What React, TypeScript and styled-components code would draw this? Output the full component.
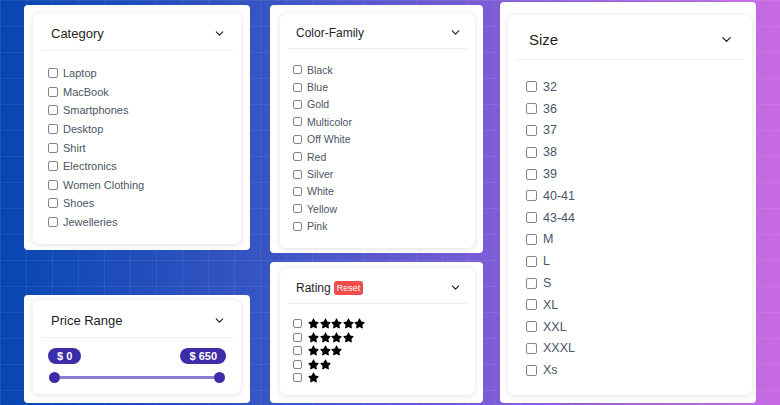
import React from "react";
import styled, { createGlobalStyle } from "styled-components";
import { ChevronDown } from "lucide-react";
import { FaStar } from "react-icons/fa";

const GlobalStyle = createGlobalStyle`
  html, body {
    margin: 0;
    padding: 0;
    width: 780px;
    height: 405px;
    overflow: hidden;
  }
  body {
    font-family: "Liberation Sans", Arial, sans-serif;
  }
`;

type Size = "sm" | "md" | "lg";

const metrics = {
  sm: { head: 36, title: 12, padX: 16, lineM: 8, font: 10.5, row: 17.4, box: 9, listL: 13, listT: 12, gap: 5 },
  md: { head: 38, title: 13, padX: 18, lineM: 8, font: 11, row: 18.6, box: 10, listL: 15, listT: 13, gap: 5 },
  lg: { head: 45, title: 15, padX: 21, lineM: 9, font: 12.5, row: 21.8, box: 11, listL: 18, listT: 16, gap: 6 },
};

const Page = styled.div`
  width: 780px;
  height: 405px;
  display: flex;
  align-items: flex-start;
  padding-left: 24px;
  box-sizing: border-box;
  background-image:
    linear-gradient(rgba(255, 255, 255, 0.07) 1px, transparent 1px),
    linear-gradient(90deg, rgba(255, 255, 255, 0.07) 1px, transparent 1px),
    linear-gradient(90deg, #0747b2 0%, #3a55c4 35%, #7b5cd6 62%, #c86be2 100%);
  background-size: 26px 26px, 26px 26px, 100% 100%;
`;

const Column = styled.div<{ $w: number; $top: number; $gap: number; $ml: number }>`
  width: ${({ $w }) => $w}px;
  margin-top: ${({ $top }) => $top}px;
  margin-left: ${({ $ml }) => $ml}px;
  display: flex;
  flex-direction: column;
  gap: ${({ $gap }) => $gap}px;
`;

const Outer = styled.div<{ $h: number; $pad: string }>`
  height: ${({ $h }) => $h}px;
  box-sizing: border-box;
  background: #ffffff;
  border-radius: 4px;
  padding: ${({ $pad }) => $pad};
  display: flex;
  flex-direction: column;
`;

const Inner = styled.div`
  flex: 1;
  background: #ffffff;
  border-radius: 7px;
  box-shadow: 0 1px 6px rgba(0, 0, 0, 0.13);
  display: flex;
  flex-direction: column;
`;

const Header = styled.div<{ $s: Size }>`
  height: ${({ $s }) => metrics[$s].head}px;
  margin: 0 ${({ $s }) => metrics[$s].lineM}px;
  padding: 4px ${({ $s }) => metrics[$s].padX - metrics[$s].lineM - 3}px 0
    ${({ $s }) => metrics[$s].padX - metrics[$s].lineM}px;
  border-bottom: 1px solid #eeeeee;
  display: flex;
  align-items: center;
  justify-content: space-between;
  flex-shrink: 0;
  box-sizing: border-box;
`;

const Title = styled.div<{ $s: Size }>`
  font-size: ${({ $s }) => metrics[$s].title}px;
  color: #1f1f1f;
  display: flex;
  align-items: center;
  gap: 3px;
`;

const ResetBadge = styled.span`
  background: #ef4c4c;
  color: #ffffff;
  font-size: 9px;
  padding: 2px 3px;
  border-radius: 3px;
  line-height: 10px;
`;

const List = styled.div<{ $s: Size; $top?: number }>`
  padding: ${({ $s, $top }) => $top ?? metrics[$s].listT}px 0 0 ${({ $s }) => metrics[$s].listL}px;
  display: flex;
  flex-direction: column;
`;

const Row = styled.label<{ $s: Size; $h?: number }>`
  height: ${({ $s, $h }) => $h ?? metrics[$s].row}px;
  display: flex;
  align-items: center;
  gap: ${({ $s }) => metrics[$s].gap}px;
  font-size: ${({ $s }) => metrics[$s].font}px;
  color: #4b5563;
`;

const Box = styled.span<{ $s: Size }>`
  width: ${({ $s }) => metrics[$s].box}px;
  height: ${({ $s }) => metrics[$s].box}px;
  box-sizing: border-box;
  border: 1px solid #858585;
  border-radius: 2px;
  background: #ffffff;
  flex-shrink: 0;
`;

const Stars = styled.span`
  display: flex;
  gap: 0.5px;
  color: #000000;
  margin-left: 1px;
`;

const PriceBody = styled.div`
  padding: 10px 15px 0;
  display: flex;
  flex-direction: column;
`;

const Pills = styled.div`
  display: flex;
  justify-content: space-between;
`;

const Pill = styled.span`
  background: #3c2ca8;
  color: #ffffff;
  font-size: 11px;
  font-weight: bold;
  height: 16px;
  line-height: 16px;
  padding: 0 9px;
  border-radius: 8px;
`;

const Slider = styled.div`
  margin-top: 7px;
  height: 12px;
  display: flex;
  align-items: center;
  padding: 0 1px;
`;

const Thumb = styled.span`
  width: 11px;
  height: 11px;
  border-radius: 50%;
  background: #3c2ca8;
  flex-shrink: 0;
`;

const Track = styled.span`
  flex: 1;
  height: 3px;
  background: #8a7cd0;
`;

const categories = ["Laptop", "MacBook", "Smartphones", "Desktop", "Shirt", "Electronics", "Women Clothing", "Shoes", "Jewelleries"];
const colors = ["Black", "Blue", "Gold", "Multicolor", "Off White", "Red", "Silver", "White", "Yellow", "Pink"];
const sizes = ["32", "36", "37", "38", "39", "40-41", "43-44", "M", "L", "S", "XL", "XXL", "XXXL", "Xs"];

const chevron = { sm: 13, md: 13, lg: 15 };

function FilterHead({ s, children }: { s: Size; children: React.ReactNode }) {
  return (
    <Header $s={s}>
      <Title $s={s}>{children}</Title>
      <ChevronDown size={chevron[s]} strokeWidth={2.2} color="#222" />
    </Header>
  );
}

function CheckList({ s, items }: { s: Size; items: string[] }) {
  return (
    <List $s={s}>
      {items.map((item) => (
        <Row $s={s} key={item}>
          <Box $s={s} />
          {item}
        </Row>
      ))}
    </List>
  );
}

export default function App() {
  return (
    <>
      <GlobalStyle />
      <Page>
        <Column $w={226} $top={5} $gap={45} $ml={0}>
          <Outer $h={245} $pad="8px 9px 6px 9px">
            <Inner>
              <FilterHead s="md">Category</FilterHead>
              <CheckList s="md" items={categories} />
            </Inner>
          </Outer>
          <Outer $h={108} $pad="5px 9px 9px 9px">
            <Inner>
              <FilterHead s="md">Price Range</FilterHead>
              <PriceBody>
                <Pills>
                  <Pill>$ 0</Pill>
                  <Pill>$ 650</Pill>
                </Pills>
                <Slider>
                  <Thumb />
                  <Track />
                  <Thumb />
                </Slider>
              </PriceBody>
            </Inner>
          </Outer>
        </Column>
        <Column $w={213} $top={5} $gap={9} $ml={20}>
          <Outer $h={248} $pad="8px 8px 5px 10px">
            <Inner>
              <FilterHead s="sm">Color-Family</FilterHead>
              <CheckList s="sm" items={colors} />
            </Inner>
          </Outer>
          <Outer $h={141} $pad="6px 8px 8px 10px">
            <Inner>
              <FilterHead s="sm">
                Rating <ResetBadge>Reset</ResetBadge>
              </FilterHead>
              <List $s="sm" $top={13}>
                {[5, 4, 3, 2, 1].map((n) => (
                  <Row $s="sm" $h={13.5} key={n}>
                    <Box $s="sm" />
                    <Stars>
                      {Array.from({ length: n }).map((_, i) => (
                        <FaStar key={i} size={11} />
                      ))}
                    </Stars>
                  </Row>
                ))}
              </List>
            </Inner>
          </Outer>
        </Column>
        <Column $w={256} $top={2} $gap={0} $ml={17}>
          <Outer $h={401} $pad="13px 4px 8px 8px">
            <Inner>
              <FilterHead s="lg">Size</FilterHead>
              <CheckList s="lg" items={sizes} />
            </Inner>
          </Outer>
        </Column>
      </Page>
    </>
  );
}
